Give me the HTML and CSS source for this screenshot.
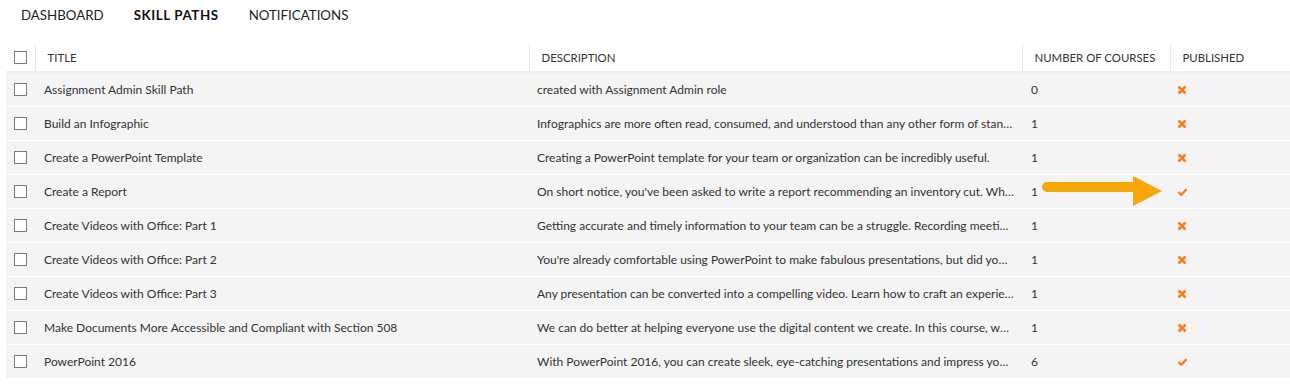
FILE: index.html
```html
<!DOCTYPE html>
<html>
<head>
<meta charset="utf-8">
<link rel="stylesheet" href="styles.css">
</head>
<body>
<div class="page">
  <nav class="tabs">
    <span class="tab">DASHBOARD</span>
    <span class="tab active">SKILL PATHS</span>
    <span class="tab">NOTIFICATIONS</span>
  </nav>
  <table class="grid">
    <colgroup>
      <col class="c-check"><col class="c-title"><col class="c-desc"><col class="c-num"><col class="c-pub">
    </colgroup>
    <thead>
      <tr>
        <th class="cb-cell"><span class="cb"></span></th>
        <th>TITLE</th>
        <th>DESCRIPTION</th>
        <th>NUMBER OF COURSES</th>
        <th>PUBLISHED</th>
      </tr>
    </thead>
    <tbody>
      <tr><td class="cb-cell"><span class="cb"></span></td><td>Assignment Admin Skill Path</td><td class="dcell"><div class="desc">created with Assignment Admin role</div></td><td>0</td><td class="pub"><svg class="ic x" viewBox="0 0 10 10"><path d="M1.5 1.5L8.5 8.5M8.5 1.5L1.5 8.5"/></svg></td></tr>
      <tr><td class="cb-cell"><span class="cb"></span></td><td>Build an Infographic</td><td class="dcell"><div class="desc">Infographics are more often read, consumed, and understood than any other form of standard content.</div></td><td>1</td><td class="pub"><svg class="ic x" viewBox="0 0 10 10"><path d="M1.5 1.5L8.5 8.5M8.5 1.5L1.5 8.5"/></svg></td></tr>
      <tr><td class="cb-cell"><span class="cb"></span></td><td>Create a PowerPoint Template</td><td class="dcell"><div class="desc">Creating a PowerPoint template for your team or organization can be incredibly useful.</div></td><td>1</td><td class="pub"><svg class="ic x" viewBox="0 0 10 10"><path d="M1.5 1.5L8.5 8.5M8.5 1.5L1.5 8.5"/></svg></td></tr>
      <tr><td class="cb-cell"><span class="cb"></span></td><td>Create a Report</td><td class="dcell"><div class="desc">On short notice, you've been asked to write a report recommending an inventory cut. What do you do?</div></td><td>1</td><td class="pub"><svg class="ic ok" viewBox="0 0 10 8"><path d="M1 4.2L3.8 6.8L9 1.2"/></svg></td></tr>
      <tr><td class="cb-cell"><span class="cb"></span></td><td>Create Videos with Office: Part 1</td><td class="dcell"><div class="desc">Getting accurate and timely information to your team can be a struggle. Recording meetings can help.</div></td><td>1</td><td class="pub"><svg class="ic x" viewBox="0 0 10 10"><path d="M1.5 1.5L8.5 8.5M8.5 1.5L1.5 8.5"/></svg></td></tr>
      <tr><td class="cb-cell"><span class="cb"></span></td><td>Create Videos with Office: Part 2</td><td class="dcell"><div class="desc">You're already comfortable using PowerPoint to make fabulous presentations, but did you know more?</div></td><td>1</td><td class="pub"><svg class="ic x" viewBox="0 0 10 10"><path d="M1.5 1.5L8.5 8.5M8.5 1.5L1.5 8.5"/></svg></td></tr>
      <tr><td class="cb-cell"><span class="cb"></span></td><td>Create Videos with Office: Part 3</td><td class="dcell"><div class="desc">Any presentation can be converted into a compelling video. Learn how to craft an experience.</div></td><td>1</td><td class="pub"><svg class="ic x" viewBox="0 0 10 10"><path d="M1.5 1.5L8.5 8.5M8.5 1.5L1.5 8.5"/></svg></td></tr>
      <tr><td class="cb-cell"><span class="cb"></span></td><td>Make Documents More Accessible and Compliant with Section 508</td><td class="dcell"><div class="desc">We can do better at helping everyone use the digital content we create. In this course, we will learn.</div></td><td>1</td><td class="pub"><svg class="ic x" viewBox="0 0 10 10"><path d="M1.5 1.5L8.5 8.5M8.5 1.5L1.5 8.5"/></svg></td></tr>
      <tr><td class="cb-cell"><span class="cb"></span></td><td>PowerPoint 2016</td><td class="dcell"><div class="desc">With PowerPoint 2016, you can create sleek, eye-catching presentations and impress your audience.</div></td><td>6</td><td class="pub"><svg class="ic ok" viewBox="0 0 10 8"><path d="M1 4.2L3.8 6.8L9 1.2"/></svg></td></tr>
    </tbody>
  </table>
  <svg class="arrow" width="122" height="32" viewBox="0 0 122 32">
    <path d="M5 12H93" stroke="#f6a80b" stroke-width="10" stroke-linecap="round"/>
    <path d="M91 1L120 16L91 31Z" fill="#f6a80b"/>
  </svg>
</div>
</body>
</html>
```
FILE: styles.css
```css
* { box-sizing: border-box; }
html, body { margin: 0; padding: 0; background: #fff; }
body { font-family: "Lato", "Liberation Sans", sans-serif; color: #333; }
.page { position: relative; width: 1290px; height: 386px; padding: 0 0 0 6px; }
.tabs { display: flex; height: 30px; align-items: center; padding-left: 0; }
.tab { font-size: 13.3px; color: #222; padding: 0 15px; }
.tab.active { font-weight: 700; color: #111; letter-spacing: 0.6px; }
.grid { border-collapse: collapse; table-layout: fixed; width: 1284px; margin-top: 14px; font-size: 12px; }
.c-check { width: 29px; }
.c-title { width: 494px; }
.c-desc { width: 493px; }
.c-num { width: 148px; }
.c-pub { width: 120px; }
thead th { height: 28px; text-align: left; font-weight: 400; color: #333; padding: 0 0 0 12px; border-left: 1px solid #e9e9e9; border-bottom: 2px solid #efefef; font-size: 11.4px; }
thead th.cb-cell { border-left: none; }
tbody td { height: 34px; background: #f4f4f4; border-bottom: 1px solid #fff; padding: 1px 0 0 9px; white-space: nowrap; overflow: hidden; vertical-align: middle; }
tbody td.cb-cell, thead th.cb-cell { padding-left: 8px; }
tbody td.dcell { padding-left: 8px; }
tbody td.pub { padding-left: 7px; }
.cb { display: block; width: 13px; height: 13px; border: 1px solid #7b7b7b; background: #fff; }
.desc { width: 477px; overflow: hidden; text-overflow: ellipsis; white-space: nowrap; }
.ic { display: block; fill: none; stroke: #ff7b1c; }
.ic.x { width: 10px; height: 10px; stroke-width: 2.6; }
.ic.ok { width: 11px; height: 8px; stroke-width: 2.4; }
.arrow { position: absolute; left: 1042px; top: 175px; }
```
